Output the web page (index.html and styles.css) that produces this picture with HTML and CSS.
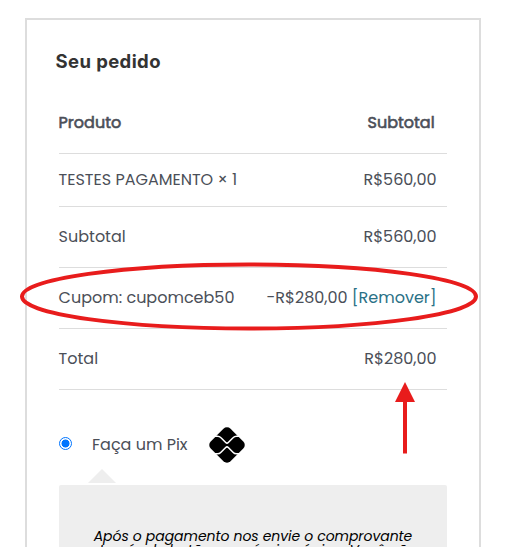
FILE: index.html
```
<!DOCTYPE html>
<html lang="pt-BR">
<head>
<meta charset="utf-8">
<title>Seu pedido</title>
<link rel="stylesheet" href="styles.css">
</head>
<body>
<main class="order">
  <h3 class="title">Seu pedido</h3>
  <div class="review">
    <div class="row head"><span>Produto</span><span>Subtotal</span></div>
    <div class="row item"><span>TESTES PAGAMENTO × 1</span><span>R$560,00</span></div>
    <div class="row"><span>Subtotal</span><span>R$560,00</span></div>
    <div class="row"><span>Cupom: cupomceb50</span><span>-R$280,00 <a class="remove">[Remover]</a></span></div>
    <div class="row"><span>Total</span><span>R$280,00</span></div>
  </div>
  <div class="payment">
    <label class="method">
      <span class="radio"></span>
      <span class="label">Faça um Pix</span>
      <svg class="pix" viewBox="0 0 38 38">
        <rect x="5" y="5" width="28" height="28" rx="5" transform="rotate(45 19 19)"/>
        <path d="M6 10.2H9.5Q11.5 10.2 13 11.8L17.7 16.5Q19 17.8 20.3 16.5L25 11.8Q26.5 10.2 28.5 10.2H32M6 27.8H9.5Q11.5 27.8 13 26.2L17.7 21.5Q19 20.2 20.3 21.5L25 26.2Q26.5 27.8 28.5 27.8H32" fill="none" stroke="#fff" stroke-width="1.5"/>
      </svg>
    </label>
    <div class="box">
      <p class="note">Após o pagamento nos envie o comprovante<br>através do botão na própria página. Você não</p>
    </div>
  </div>
</main>
<svg class="marks" viewBox="0 0 526 547">
  <ellipse cx="249" cy="296.5" rx="227" ry="32" fill="none" stroke="#e81c1c" stroke-width="4"/>
  <path d="M405 382L415 402H407V453.5H403V402H395Z" fill="#e81c1c"/>
</svg>
</body>
</html>
```
FILE: styles.css
```
* { box-sizing: border-box; }
body {
  margin: 0;
  height: 547px;
  overflow: hidden;
  padding: 18px 45px 0 25px;
  background: #fff;
  color: #4b4f58;
  font: 16px/24px Poppins, Inter, sans-serif;
}
.order {
  width: 456px;
  height: 529px;
  overflow: hidden;
  border: 2px solid #ddd;
  border-bottom: 0;
  padding: 29px 32px 0;
}
.title {
  margin: 0 0 0 -3.5px;
  font: 700 18.5px/24px Inter, sans-serif;
  letter-spacing: 0.4px;
  color: #333;
  white-space: nowrap;
}
.review { margin-top: 18px; }
.row {
  display: flex;
  justify-content: space-between;
  align-items: center;
  height: 61px;
  padding-right: 10.4px;
  border-bottom: 1px solid #ddd;
  white-space: nowrap;
}
.row > :first-child { margin-left: -0.4px; }
.head { height: 63px; padding: 1px 12.4px 0 0; -webkit-text-stroke: 0.6px #4b4f58; }
.item { height: 53px; }
.remove { color: #2a7186; }
.method { display: flex; align-items: center; height: 38px; margin-top: 36px; }
.radio {
  width: 13px;
  height: 13px;
  margin-top: -3px;
  border: 1px solid #0075ff;
  border-radius: 50%;
  background: radial-gradient(circle, #0075ff 3.7px, #fff 4.3px);
}
.label { width: 97px; margin: 0 19px 0 20px; white-space: nowrap; }
.pix { width: 38px; height: 38px; margin-top: -1px; }
.box {
  position: relative;
  height: 62px;
  margin-top: 21px;
  padding: 44px 30px 0;
  border-radius: 2px 2px 0 0;
  background: #eee;
}
.box::before {
  content: "";
  position: absolute;
  left: 29px;
  top: -16px;
  border: 14px solid transparent;
  border-top: 0;
  border-bottom-color: #eee;
}
.note {
  margin: 0;
  color: #000;
  font-size: 14px;
  font-style: italic;
  line-height: 14px;
  letter-spacing: -0.05px;
  text-align: center;
  white-space: nowrap;
}
.marks { position: absolute; left: 0; top: 0; width: 526px; height: 547px; pointer-events: none; }
```
